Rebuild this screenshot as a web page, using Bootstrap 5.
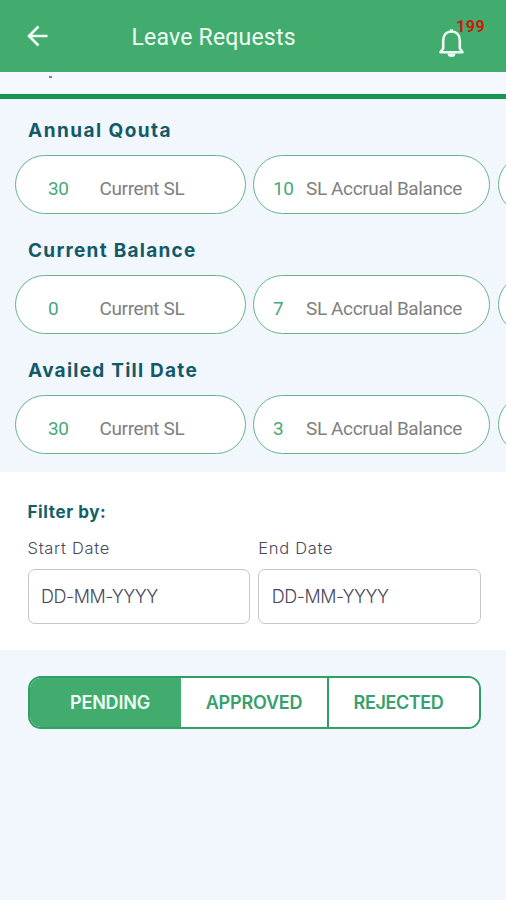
<!DOCTYPE html>
<html lang="en">
<head>
<meta charset="utf-8">
<meta name="viewport" content="width=device-width, initial-scale=1">
<title>Leave Requests</title>
<link href="https://cdn.jsdelivr.net/npm/bootstrap@5.3.0/dist/css/bootstrap.min.css" rel="stylesheet">
<style>
body{height:900px;overflow:hidden;background:#f2f7fe;font-family:Inter,sans-serif}
.topbar{height:72px;background:#41ac6e;color:#effdf3;font-family:Roboto,sans-serif}
.back-btn{margin-left:26px;width:22px;height:22px;margin-top:-1px}
.topbar h1{font-size:23px;font-weight:400;line-height:28px;margin:3px 0 0 83.5px;letter-spacing:.2px}
.bell{margin-left:142px;margin-top:13px;width:27px;height:30px}
.bell-count{left:18.5px;top:-11px;font-size:16px;line-height:20px;font-weight:700;color:#c4200c;letter-spacing:.4px}
.tab-strip{height:27px;border-bottom:5px solid #159653;background:#f5f9ff;padding:4px 0 0 48.5px}
.strip-tick{width:3px;height:1.5px;background:#7d8290}
.quota{height:120px;padding:18px 0 0 14.5px}
.quota h2{font-size:19px;font-weight:700;line-height:28px;margin:0 0 10px 13.5px;color:#125a68;letter-spacing:1.25px}
.quota .ls-wide{letter-spacing:1.45px}
.pill-row{gap:7.5px}
.quota-pill{flex:none;width:231px;height:59px;border:1.5px solid #65b38a;border-radius:30px;background:#fff;font-family:Roboto,sans-serif;font-size:19px;line-height:24px;padding:8px 0 0 32.5px;color:#808080;letter-spacing:-.38px}
.quota-pill b{font-weight:400;color:#49a878;width:51.5px}
.quota-pill.accrual{width:237px;padding-left:19px}
.quota-pill.accrual b{width:33px}
.filters{height:178px;margin-top:13px;background:#fff;padding:28px 25px 0 27.5px;color:#48485c}
.filters h3{font-size:17px;font-weight:700;line-height:24px;margin:0;color:#126068;letter-spacing:.6px}
.filters label{font-size:16.5px;font-weight:300;line-height:24px;margin-top:12px;letter-spacing:.7px}
.date-box{height:55px;border:1.5px solid #c6c6c6;border-radius:7px;font-size:18px;font-weight:300;margin-top:9px;letter-spacing:-.42px;padding-left:12.5px}
.status-tabs{margin:26px 25px 0 28px;height:53px;border:2.5px solid #2f9f65;border-radius:13px;overflow:hidden;background:#fff}
.status-tabs button{border:0;background:#fff;color:#36a06c;font-size:18px;font-weight:600;padding:0;letter-spacing:-.2px}
.status-tabs .tab-pending{width:151px;background:#41ac6e;color:#effdf3;padding-left:9px}
.status-tabs .tab-approved{width:146px}
.status-tabs .tab-rejected{border-left:2.5px solid #2f9f65;padding-right:11px;letter-spacing:-.4px}
</style>
<script src="https://cdn.jsdelivr.net/npm/bootstrap@5.3.0/dist/js/bootstrap.bundle.min.js"></script>
</head>
<body>
<header class="topbar d-flex align-items-center">
<svg class="back-btn" viewBox="0 0 22 22" fill="none" stroke="currentColor" stroke-width="2.7"><path d="M21.500 11H3M12.500 1.500L3 11l9.500 9.500"/></svg>
<h1>Leave Requests</h1>
<div class="bell position-relative">
<svg class="d-block" width="27" height="30" viewBox="0 0 27 30" fill="none" stroke="currentColor" stroke-width="2.6" stroke-linejoin="round"><path d="M5.200 20.500V12.500C5.200 7 8.500 3.500 13.500 3.500S21.800 7 21.800 12.500V20.500L24.500 24.200H2.500Z"/><path d="M13.500 1.200v2"/><path d="M9.500 25.500h8a4 3.600 0 0 1-8 0z" fill="currentColor" stroke="none"/></svg>
<span class="bell-count position-absolute">199</span></div>
</header>
<div class="tab-strip"><div class="strip-tick"></div></div>
<main>
<section class="quota"><h2 class="ls-wide">Annual Qouta</h2><div class="pill-row d-flex overflow-hidden"><div class="quota-pill d-flex align-items-center"><b>30</b><span>Current SL</span></div><div class="quota-pill accrual d-flex align-items-center"><b>10</b><span>SL Accrual Balance</span></div><div class="quota-pill"></div></div></section>
<section class="quota"><h2>Current Balance</h2><div class="pill-row d-flex overflow-hidden"><div class="quota-pill d-flex align-items-center"><b>0</b><span>Current SL</span></div><div class="quota-pill accrual d-flex align-items-center"><b>7</b><span>SL Accrual Balance</span></div><div class="quota-pill"></div></div></section>
<section class="quota"><h2>Availed Till Date</h2><div class="pill-row d-flex overflow-hidden"><div class="quota-pill d-flex align-items-center"><b>30</b><span>Current SL</span></div><div class="quota-pill accrual d-flex align-items-center"><b>3</b><span>SL Accrual Balance</span></div><div class="quota-pill"></div></div></section>
<section class="filters"><h3>Filter by:</h3>
<div class="d-flex gap-2"><div class="flex-fill"><label class="d-block">Start Date</label><div class="date-box d-flex align-items-center">DD-MM-YYYY</div></div><div class="flex-fill"><label class="d-block">End Date</label><div class="date-box d-flex align-items-center">DD-MM-YYYY</div></div></div></section>
<div class="status-tabs d-flex"><button class="tab-pending">PENDING</button><button class="tab-approved">APPROVED</button><button class="tab-rejected flex-fill">REJECTED</button></div>
</main>
</body>
</html>
